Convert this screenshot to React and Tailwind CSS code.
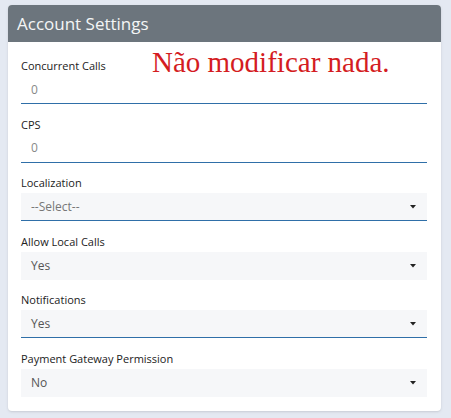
import React from 'react';

const fields = [
  { label: 'Concurrent Calls', type: 'input', value: '0', line: true },
  { label: 'CPS', type: 'input', value: '0', line: true },
  { label: 'Localization', type: 'select', value: '--Select--', line: true, muted: true },
  { label: 'Allow Local Calls', type: 'select', value: 'Yes', line: false },
  { label: 'Notifications', type: 'select', value: 'Yes', line: true },
  { label: 'Payment Gateway Permission', type: 'select', value: 'No', line: false },
];

const Caret = () => (
  <svg width="6" height="4" viewBox="0 0 6 4" className="mr-[11px]">
    <path d="M0 0h6L3 3.5z" fill="#222" />
  </svg>
);

const Field = ({ f }) => (
  <div>
    <label className="block text-[11px] font-medium text-[#222] leading-[14px] mb-[3px]">{f.label}</label>
    {f.type === 'input' ? (
      <div className={`h-[28px] flex items-center pl-[10px] text-[12px] text-[#888] ${f.line ? 'border-b border-[#2f6fa8]' : ''}`}>
        {f.value}
      </div>
    ) : (
      <div className={`h-[28px] flex items-center justify-between pl-[10px] bg-[#f6f7f9] text-[12px] ${f.muted ? 'text-[#777]' : 'text-[#555]'} ${f.line ? 'border-b border-[#2f6fa8]' : ''}`}>
        <span>{f.value}</span>
        <Caret />
      </div>
    )}
  </div>
);

export default function App() {
  return (
    <div className="min-h-[418px] bg-[#e4e9f2] pl-[8px] pr-[10px] pt-[5px] pb-[7px] font-['Open_Sans',sans-serif]">
      <div className="bg-white rounded-[4px] shadow-sm overflow-hidden relative">
        <div className="h-[37px] bg-[#6c757d] flex items-center pl-[9px] text-[17px] text-[#f4f5f6]">
          Account Settings
        </div>
        <span className="absolute left-[144px] top-[41px] text-[29px] leading-[33px] text-[#d41c22] font-['Liberation_Serif',serif]">
          Não modificar nada.
        </span>
        <div className="pl-[13px] pr-[14px] pt-[17px] pb-[14px] flex flex-col gap-[13.5px]">
          {fields.map((f) => (
            <Field key={f.label} f={f} />
          ))}
        </div>
      </div>
    </div>
  );
}
